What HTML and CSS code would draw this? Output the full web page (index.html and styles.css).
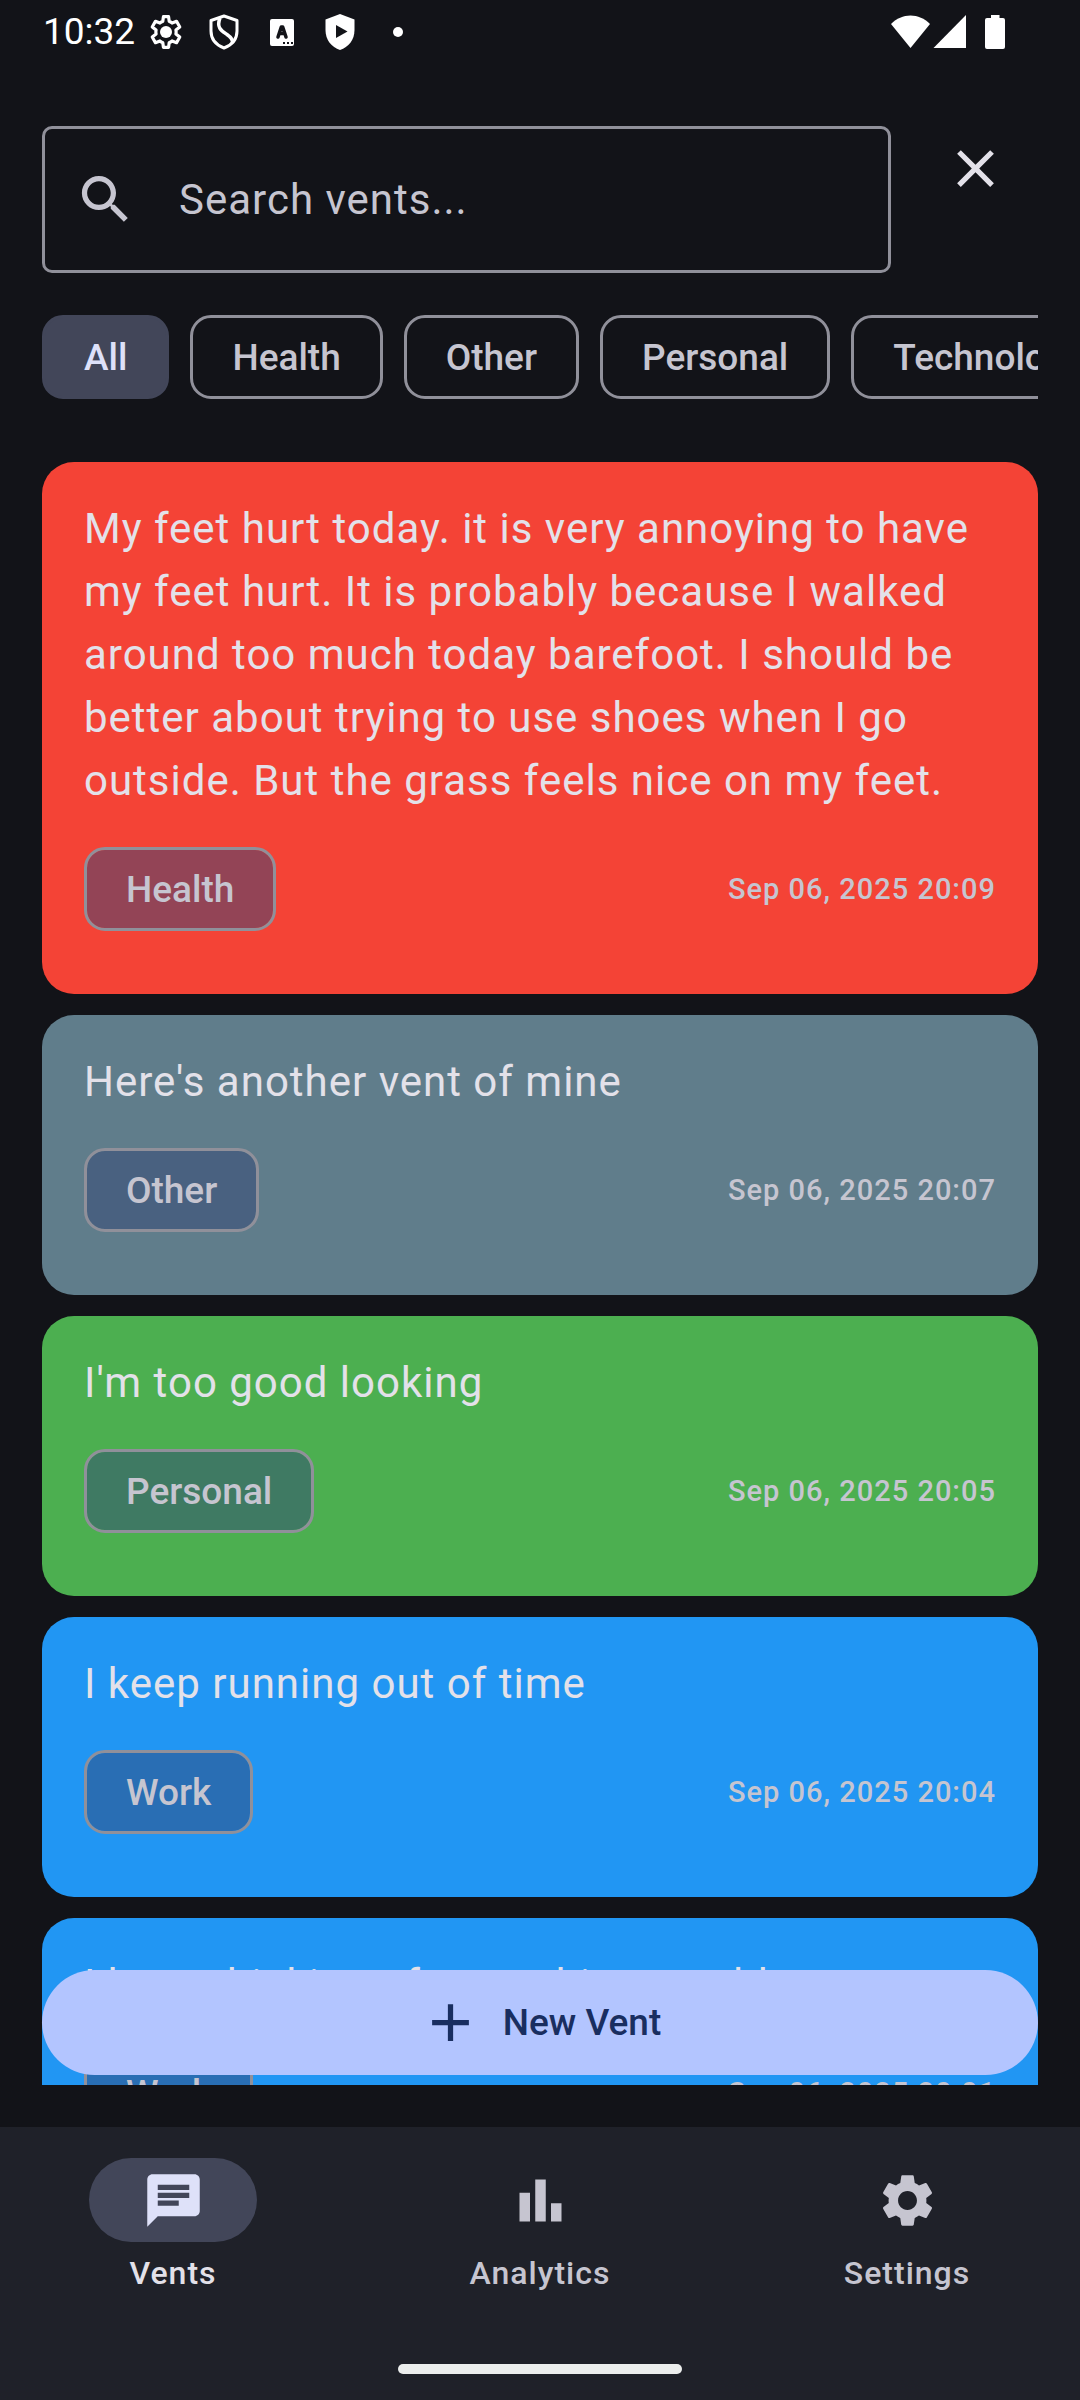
FILE: index.html
```html
<!DOCTYPE html>
<html lang="en">
<head>
<meta charset="utf-8">
<meta name="viewport" content="width=device-width, initial-scale=1">
<title>Vents</title>
<link rel="stylesheet" href="styles.css">
</head>
<body>
<div class="app">
  <div class="status">
    <span class="status-time">10:32</span>
    <div class="status-notices">
      <svg viewBox="0 0 58 40"><path transform="translate(9.800 0.800) scale(1.600)" fill="none" stroke="#fff" stroke-width="2" stroke-linejoin="round" d="M18.200 13.200 C18.400 12.400 18.400 11.600 18.200 10.800 L20.600 8.900 L18.600 5.300 L15.800 6.400 C15.200 5.900 14.600 5.600 14 5.300 L13.600 2.400 H10.400 L10 5.300 C9.400 5.600 8.800 5.900 8.200 6.400 L5.400 5.300 L3.400 8.900 L5.800 10.800 C5.600 11.600 5.600 12.400 5.800 13.200 L3.400 15.100 L5.400 18.700 L8.200 17.600 C8.800 18.100 9.400 18.400 10 18.700 L10.400 21.600 H13.600 L14 18.700 C14.600 18.400 15.200 18.100 15.800 17.600 L18.600 18.700 L20.600 15.100 Z"/><circle cx="29" cy="20" r="6" fill="#fff"/></svg>
      <svg viewBox="0 0 58 40"><path fill="none" stroke="#fff" stroke-width="3" stroke-linejoin="round" d="M29 4 L42 8.500 V19 C42 27 37 33 29 36 C21 33 16 27 16 19 V8.500 Z"/><path fill="none" stroke="#fff" stroke-width="3.500" d="M25 6 C21 16 27 19 32 22.500 C37 26 38 28 37.500 31"/></svg>
      <svg viewBox="0 0 58 40"><rect x="17" y="7" width="24" height="27" rx="2" fill="#fff"/><path fill="none" stroke="#121318" stroke-width="3.500" stroke-linecap="round" stroke-linejoin="round" d="M25 25 L28.300 15 H29.700 L33 25 M26.500 21.500 H31.500"/><path fill="#121318" d="M30 30h2v2h-2zM34 30h2v2h-2zM38 30h2v2h-2z"/></svg>
      <svg viewBox="0 0 58 40"><path fill="#fff" d="M29 2 L43.500 7.500 V18 C43.500 28 37.500 35 29 38 C20.500 35 14.500 28 14.500 18 V7.500 Z"/><path fill="#121318" d="M25 13 L36.500 19.500 L25 26 Z"/></svg>
      <svg viewBox="0 0 58 40"><circle cx="29" cy="20" r="5" fill="#fff"/></svg>
    </div>
    <svg class="status-system" viewBox="0 0 116 40"><g fill="#fff"><path d="M0 12 C11 0.500 28 0.500 39 12 L19.500 36 Z"/><path d="M75 3 V36 H42.500 Z"/><path d="M100 3 H108.500 V6 H112 Q114 6 114 8 V35 Q114 37 112 37 H96 Q94 37 94 35 V8 Q94 6 96 6 H100 Z"/></g></svg>
  </div>

  <main class="content">
    <div class="search-row">
      <label class="search">
        <svg class="icon" viewBox="0 0 24 24"><path d="M15.500 14h-.79l-.28-.27C15.410 12.590 16 11.110 16 9.500 16 5.910 13.090 3 9.500 3S3 5.910 3 9.500 5.910 16 9.500 16c1.610 0 3.090-.59 4.230-1.570l.27.28v.79l5 4.990L20.490 19l-4.990-5zm-6 0C7.010 14 5 11.990 5 9.500S7.010 5 9.500 5 14 7.010 14 9.500 11.990 14 9.500 14z"/></svg>
        <input class="search-input" type="text" placeholder="Search vents..." aria-label="Search vents">
      </label>
      <button class="close" type="button" aria-label="Close search">
        <svg class="icon" viewBox="0 0 24 24"><path d="M19 6.410 17.590 5 12 10.590 6.410 5 5 6.410 10.590 12 5 17.590 6.410 19 12 13.410 17.590 19 19 17.590 13.410 12z"/></svg>
      </button>
    </div>

    <div class="filters">
      <button class="chip chip-selected" type="button">All</button>
      <button class="chip" type="button">Health</button>
      <button class="chip" type="button">Other</button>
      <button class="chip" type="button">Personal</button>
      <button class="chip" type="button">Technology</button>
    </div>

    <div class="feed">
      <div class="list">
        <article class="card card-health">
          <p class="card-text">My feet hurt today. it is very annoying to have my feet hurt. It is probably because I walked around too much today barefoot. I should be better about trying to use shoes when I go outside. But the grass feels nice on my feet.</p>
          <div class="card-foot"><button class="chip chip-tag" type="button">Health</button><time class="date">Sep 06, 2025 20:09</time></div>
        </article>
        <article class="card card-other">
          <p class="card-text">Here's another vent of mine</p>
          <div class="card-foot"><button class="chip chip-tag" type="button">Other</button><time class="date">Sep 06, 2025 20:07</time></div>
        </article>
        <article class="card card-personal">
          <p class="card-text">I'm too good looking</p>
          <div class="card-foot"><button class="chip chip-tag" type="button">Personal</button><time class="date">Sep 06, 2025 20:05</time></div>
        </article>
        <article class="card card-work">
          <p class="card-text">I keep running out of time</p>
          <div class="card-foot"><button class="chip chip-tag" type="button">Work</button><time class="date">Sep 06, 2025 20:04</time></div>
        </article>
        <article class="card card-work">
          <p class="card-text">I keep thinking of something would</p>
          <div class="card-foot"><button class="chip chip-tag" type="button">Work</button><time class="date">Sep 06, 2025 20:01</time></div>
        </article>
      </div>
      <button class="new-vent" type="button">
        <svg class="icon" viewBox="0 0 24 24"><path d="M19 13h-6v6h-2v-6H5v-2h6V5h2v6h6v2z"/></svg>
        New Vent
      </button>
    </div>
  </main>

  <nav class="nav">
    <div class="nav-items">
      <a class="nav-item nav-active" href="#vents" aria-current="page">
        <span class="nav-pill"><svg class="icon" viewBox="0 0 24 24"><path d="M20 2H4c-1.100 0-1.990.9-1.990 2L2 22l4-4h14c1.100 0 2-.9 2-2V4c0-1.100-.9-2-2-2zM6 9h12v2H6V9zm8 5H6v-2h8v2zm4-6H6V6h12v2z"/></svg></span>
        Vents
      </a>
      <a class="nav-item" href="#analytics">
        <span class="nav-pill"><svg class="icon" viewBox="0 0 24 24"><path d="M4 9h4v11H4zM16 13h4v7h-4zM10 4h4v16h-4z"/></svg></span>
        Analytics
      </a>
      <a class="nav-item" href="#settings">
        <span class="nav-pill"><svg class="icon" viewBox="0 0 24 24"><path d="M19.140 12.940c.04-.3.06-.61.06-.94 0-.32-.02-.64-.07-.94l2.030-1.580c.18-.14.23-.41.12-.61l-1.920-3.320c-.12-.22-.37-.29-.59-.22l-2.390.96c-.5-.38-1.030-.7-1.620-.94L14.400 2.810c-.04-.24-.24-.41-.48-.41h-3.840c-.24 0-.43.17-.47.41L9.250 5.350C8.660 5.590 8.120 5.920 7.630 6.290L5.240 5.330c-.22-.08-.47 0-.59.22L2.740 8.870c-.12.21-.08.47.12.61l2.030 1.580c-.05.3-.09.63-.09.94s.02.64.07.94l-2.030 1.580c-.18.14-.23.41-.12.61l1.920 3.320c.12.22.37.29.59.22l2.390-.96c.5.38 1.030.7 1.620.94l.36 2.540c.05.24.24.41.48.41h3.840c.24 0 .44-.17.47-.41l.36-2.540c.59-.24 1.130-.56 1.620-.94l2.390.96c.22.08.47 0 .59-.22l1.920-3.320c.12-.22.07-.47-.12-.61l-2.010-1.580zM12 15.600c-1.980 0-3.600-1.620-3.600-3.600s1.620-3.600 3.600-3.600 3.600 1.620 3.600 3.600-1.620 3.600-3.600 3.600z"/></svg></span>
        Settings
      </a>
    </div>
    <div class="home-bar"></div>
  </nav>
</div>
</body>
</html>
```
FILE: styles.css
```css
* { box-sizing: border-box; }

body {
  margin: 0;
  background: #121318;
  color: #e3e1e9;
  font-family: Roboto, "Liberation Sans", sans-serif;
  font-size: 42px;
  line-height: 63px;
}

button, input { font: inherit; color: inherit; }
button { margin: 0; border: 0; padding: 0; background: none; cursor: pointer; }

.app {
  display: flex;
  flex-direction: column;
  height: 100vh;
}

.icon {
  display: block;
  flex: none;
  width: 63px;
  height: 63px;
  fill: currentColor;
}

/* System status bar */
.status {
  display: flex;
  align-items: center;
  flex: none;
  gap: 2px;
  height: 63px;
  padding: 0 73px 0 43px;
  color: #fff;
}
.status-time { font-size: 37px; line-height: 42px; }
.status-notices { display: flex; flex: 1; }
.status-notices svg { width: 58px; height: 40px; }
.status-system { width: 116px; height: 40px; }

/* Search and filters */
.content {
  display: flex;
  flex-direction: column;
  flex: 1;
  min-height: 0;
  padding: 42px;
}
.search-row {
  display: flex;
  align-items: flex-start;
  gap: 21px;
}
.search {
  display: flex;
  align-items: center;
  flex: 1;
  gap: 42px;
  min-width: 0;
  height: 147px;
  margin-top: 21px;
  padding: 0 29px;
  border: 3px solid #90909a;
  border-radius: 10px;
  color: #c6c5d0;
}
.search-input {
  flex: 1;
  min-width: 0;
  padding: 0;
  border: 0;
  outline: 0;
  background: none;
  letter-spacing: 1px;
}
.search-input::placeholder { color: #c6c5d0; opacity: 1; }
.close {
  display: grid;
  place-items: center;
  width: 126px;
  height: 126px;
}

.filters {
  display: flex;
  flex: none;
  gap: 21px;
  margin-top: 42px;
  overflow-x: auto;
  scrollbar-width: none;
}
.chip {
  flex: none;
  height: 84px;
  padding: 0 39px;
  border: 3px solid #90909a;
  border-radius: 21px;
  color: #c6c5d0;
  font-size: 37px;
  font-weight: 500;
  line-height: 53px;
}
.chip-selected {
  border-color: #424659;
  background: #424659;
  color: #dee1f9;
}

/* Vent cards */
.feed {
  position: relative;
  flex: 1;
  min-height: 0;
  margin-top: 63px;
}
.list {
  display: flex;
  flex-direction: column;
  gap: 21px;
  height: 100%;
  overflow-y: auto;
  scrollbar-width: none;
}
.card {
  flex: none;
  padding: 35px 42px 63px;
  border-radius: 32px;
}
.card-health { background: #f44336; }
.card-other { background: #607d8b; }
.card-personal { background: #4caf50; }
.card-work { background: #2196f3; }
.card-text { margin: 0; letter-spacing: 1px; }
.card-foot {
  display: flex;
  align-items: center;
  justify-content: space-between;
  margin-top: 35px;
}
.chip-tag { background: rgba(50, 69, 118, 0.5); background-clip: padding-box; }
.date {
  color: #c6c5d0;
  font-size: 29px;
  font-weight: 500;
  line-height: 42px;
  letter-spacing: 1px;
}
.new-vent {
  position: absolute;
  right: 0;
  bottom: 10px;
  left: 0;
  display: flex;
  align-items: center;
  justify-content: center;
  gap: 21px;
  height: 105px;
  border-radius: 53px;
  background: #b3c5ff;
  color: #192e60;
  font-size: 37px;
  font-weight: 500;
  line-height: 53px;
}

/* Bottom navigation */
.nav {
  flex: none;
  padding: 31px 0 26px;
  background: #1f2129;
}
.nav-items { display: flex; gap: 21px; }
.nav-item {
  display: flex;
  flex: 1;
  flex-direction: column;
  align-items: center;
  gap: 10px;
  color: #c6c5d0;
  font-size: 32px;
  font-weight: 500;
  line-height: 42px;
  letter-spacing: 1px;
  text-decoration: none;
}
.nav-active { color: #e3e1e9; }
.nav-pill {
  display: grid;
  place-items: center;
  width: 168px;
  height: 84px;
  border-radius: 42px;
}
.nav-active .nav-pill { background: #424659; color: #dee1f9; }
.home-bar {
  width: 284px;
  height: 10px;
  margin: 70px auto 0;
  border-radius: 5px;
  background: #eceeed;
}
```
